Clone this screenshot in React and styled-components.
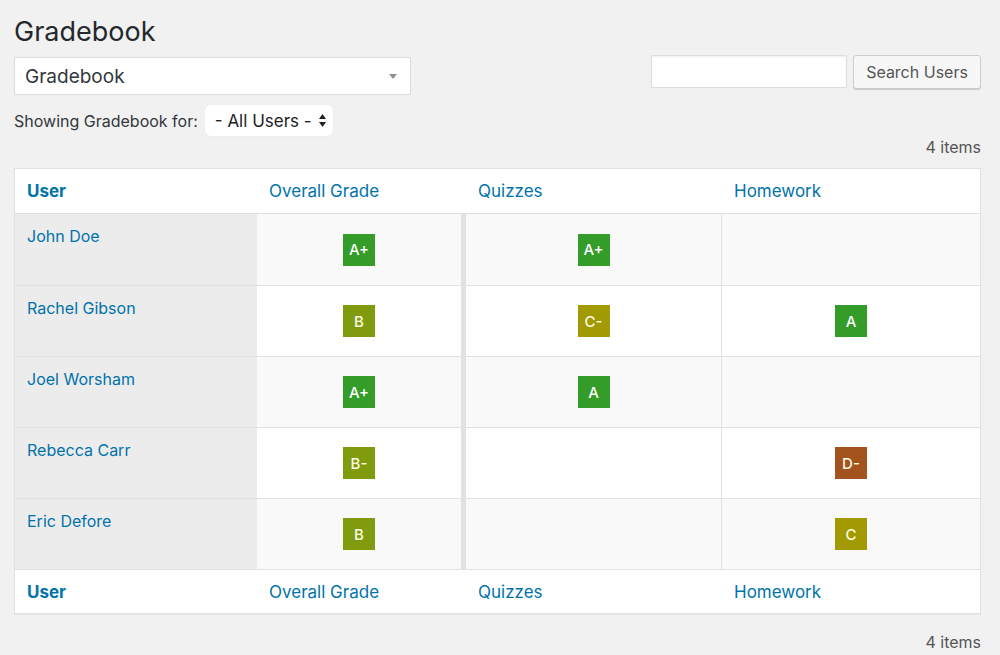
import React from "react";
import styled, { createGlobalStyle } from "styled-components";

/* ================= GLOBAL ================= */

const GlobalStyle = createGlobalStyle`
  html, body {
    margin: 0;
    padding: 0;
    background: #f1f1f1;
  }
  body {
    font-family: Inter, Roboto, "Noto Sans", sans-serif;
    color: #23282d;
  }
  * {
    box-sizing: border-box;
  }
`;

/* ================= LAYOUT ================= */

const Page = styled.div`
  padding: 14px 19px 0 14px;
  min-height: 655px;
`;

const TopBar = styled.div`
  display: flex;
  justify-content: space-between;
  align-items: flex-start;
`;

const LeftCol = styled.div`
  display: flex;
  flex-direction: column;
`;

const Title = styled.h1`
  margin: 0;
  font-size: 27px;
  font-weight: 400;
  line-height: 36px;
  color: #23282d;
`;

/* ================= GRADEBOOK SELECT ================= */

const BookSelect = styled.div`
  margin-top: 7px;
  width: 397px;
  height: 38px;
  background: #fff;
  border: 1px solid #dcdcdc;
  display: flex;
  align-items: center;
  justify-content: space-between;
  padding: 0 13px 0 10px;
  font-size: 19px;
  color: #32373c;
`;

const Caret = styled.span`
  width: 0;
  height: 0;
  border-left: 4px solid transparent;
  border-right: 4px solid transparent;
  border-top: 5px solid #8c8f94;
`;

const FilterRow = styled.div`
  margin-top: 10px;
  display: flex;
  align-items: center;
  gap: 7px;
  font-size: 16px;
  color: #32373c;
`;

const UserSelect = styled.div`
  width: 128px;
  height: 31px;
  background: #fff;
  border-radius: 5px;
  box-shadow: 0 0 1px rgba(0, 0, 0, 0.15);
  display: flex;
  align-items: center;
  justify-content: space-between;
  padding: 0 6px 0 10px;
  font-size: 17px;
  color: #222;
`;

/* ================= SEARCH ================= */

const SearchBox = styled.div`
  margin-top: 41px;
  display: flex;
  gap: 6px;
`;

const SearchInput = styled.input`
  width: 196px;
  height: 33px;
  border: 1px solid #ddd;
  background: #fff;
  box-shadow: inset 0 1px 2px rgba(0, 0, 0, 0.07);
  outline: none;
`;

const SearchButton = styled.button`
  width: 128px;
  height: 34px;
  background: #f7f7f7;
  border: 1px solid #ccc;
  border-radius: 3px;
  box-shadow: 0 1px 0 #ccc;
  font-family: inherit;
  font-size: 16px;
  color: #555;
  padding: 0;
`;

const ItemCount = styled.div`
  text-align: right;
  font-size: 16px;
  color: #555;
  line-height: 20px;
  margin: ${(p) => (p.bottom ? "18px 0 0" : "1px 0 11px")};
`;

/* ================= TABLE ================= */

const Table = styled.table`
  width: 967px;
  table-layout: fixed;
  border-collapse: separate;
  border-spacing: 0;
  background: #fff;
  border: 1px solid #e1e1e1;
  box-shadow: 0 1px 1px rgba(0, 0, 0, 0.04);
`;

const Th = styled.th`
  height: ${(p) => (p.foot ? "44px" : "45px")};
  text-align: left;
  padding: 0 12px;
  font-size: 17px;
  font-weight: ${(p) => (p.bold ? 700 : 400)};
  color: #0073aa;
  background: #fff;
  border-bottom: ${(p) => (p.foot ? "none" : "1px solid #e1e1e1")};
  border-top: ${(p) => (p.foot ? "1px solid #e1e1e1" : "none")};
`;

const Tr = styled.tr`
  background: ${(p) => (p.alt ? "#f9f9f9" : "#fff")};
`;

const NameCell = styled.td`
  height: 71px;
  vertical-align: top;
  padding: 12px 12px 0;
  background: #ececec;
  font-size: 16px;
  color: #0073aa;
  border-top: ${(p) => (p.first ? "none" : "1px solid #e1e1e1")};
`;

const GradeCell = styled.td`
  height: 71px;
  text-align: center;
  vertical-align: middle;
  padding: 0;
  border-top: ${(p) => (p.first ? "none" : "1px solid #e1e1e1")};
  border-right: ${(p) =>
    p.thick ? "5px solid #e1e1e1" : p.line ? "1px solid #e1e1e1" : "none"};
`;

const Badge = styled.span`
  display: inline-flex;
  align-items: center;
  justify-content: center;
  width: 32px;
  height: 32px;
  font-size: 15px;
  font-weight: 500;
  color: ${(p) => (p.grade[0] === "A" ? "#ffffff" : "#fbfbe4")};
  background: ${(p) =>
    p.grade[0] === "A"
      ? "#349c28"
      : p.grade[0] === "B"
      ? "#809b0d"
      : p.grade[0] === "C"
      ? "#a29a02"
      : "#a5531e"};
`;

/* ================= DATA ================= */

const rows = [
  { name: "John Doe", overall: "A+", quizzes: "A+", homework: "" },
  { name: "Rachel Gibson", overall: "B", quizzes: "C-", homework: "A" },
  { name: "Joel Worsham", overall: "A+", quizzes: "A", homework: "" },
  { name: "Rebecca Carr", overall: "B-", quizzes: "", homework: "D-" },
  { name: "Eric Defore", overall: "B", quizzes: "", homework: "C" },
];

function Arrows() {
  return (
    <svg width="9" height="15" viewBox="0 0 9 15">
      <path d="M4.5 1 L8 6 H1 Z" fill="#222" />
      <path d="M4.5 14 L8 9 H1 Z" fill="#222" />
    </svg>
  );
}

function HeadRow({ foot }) {
  return (
    <tr>
      <Th foot={foot} bold>
        User
      </Th>
      <Th foot={foot}>Overall Grade</Th>
      <Th foot={foot}>Quizzes</Th>
      <Th foot={foot}>Homework</Th>
    </tr>
  );
}

/* ================= COMPONENT ================= */

export default function App() {
  return (
    <Page>
      <GlobalStyle />

      {/* ===== TOP ===== */}
      <TopBar>
        <LeftCol>
          <Title>Gradebook</Title>
          <BookSelect>
            <span>Gradebook</span>
            <Caret />
          </BookSelect>
          <FilterRow>
            <span>Showing Gradebook for:</span>
            <UserSelect>
              <span>- All Users -</span>
              <Arrows />
            </UserSelect>
          </FilterRow>
        </LeftCol>

        <SearchBox>
          <SearchInput type="search" />
          <SearchButton>Search Users</SearchButton>
        </SearchBox>
      </TopBar>

      <ItemCount>4 items</ItemCount>

      {/* ===== TABLE ===== */}
      <Table>
        <colgroup>
          <col style={{ width: 242 }} />
          <col style={{ width: 209 }} />
          <col style={{ width: 256 }} />
          <col style={{ width: 258 }} />
        </colgroup>
        <thead>
          <HeadRow />
        </thead>
        <tbody>
          {rows.map((r, i) => (
            <Tr key={r.name} alt={i % 2 === 0}>
              <NameCell first={i === 0}>{r.name}</NameCell>
              <GradeCell first={i === 0} thick>
                {r.overall && <Badge grade={r.overall}>{r.overall}</Badge>}
              </GradeCell>
              <GradeCell first={i === 0} line>
                {r.quizzes && <Badge grade={r.quizzes}>{r.quizzes}</Badge>}
              </GradeCell>
              <GradeCell first={i === 0}>
                {r.homework && <Badge grade={r.homework}>{r.homework}</Badge>}
              </GradeCell>
            </Tr>
          ))}
        </tbody>
        <tfoot>
          <HeadRow foot />
        </tfoot>
      </Table>

      <ItemCount bottom>4 items</ItemCount>
    </Page>
  );
}
